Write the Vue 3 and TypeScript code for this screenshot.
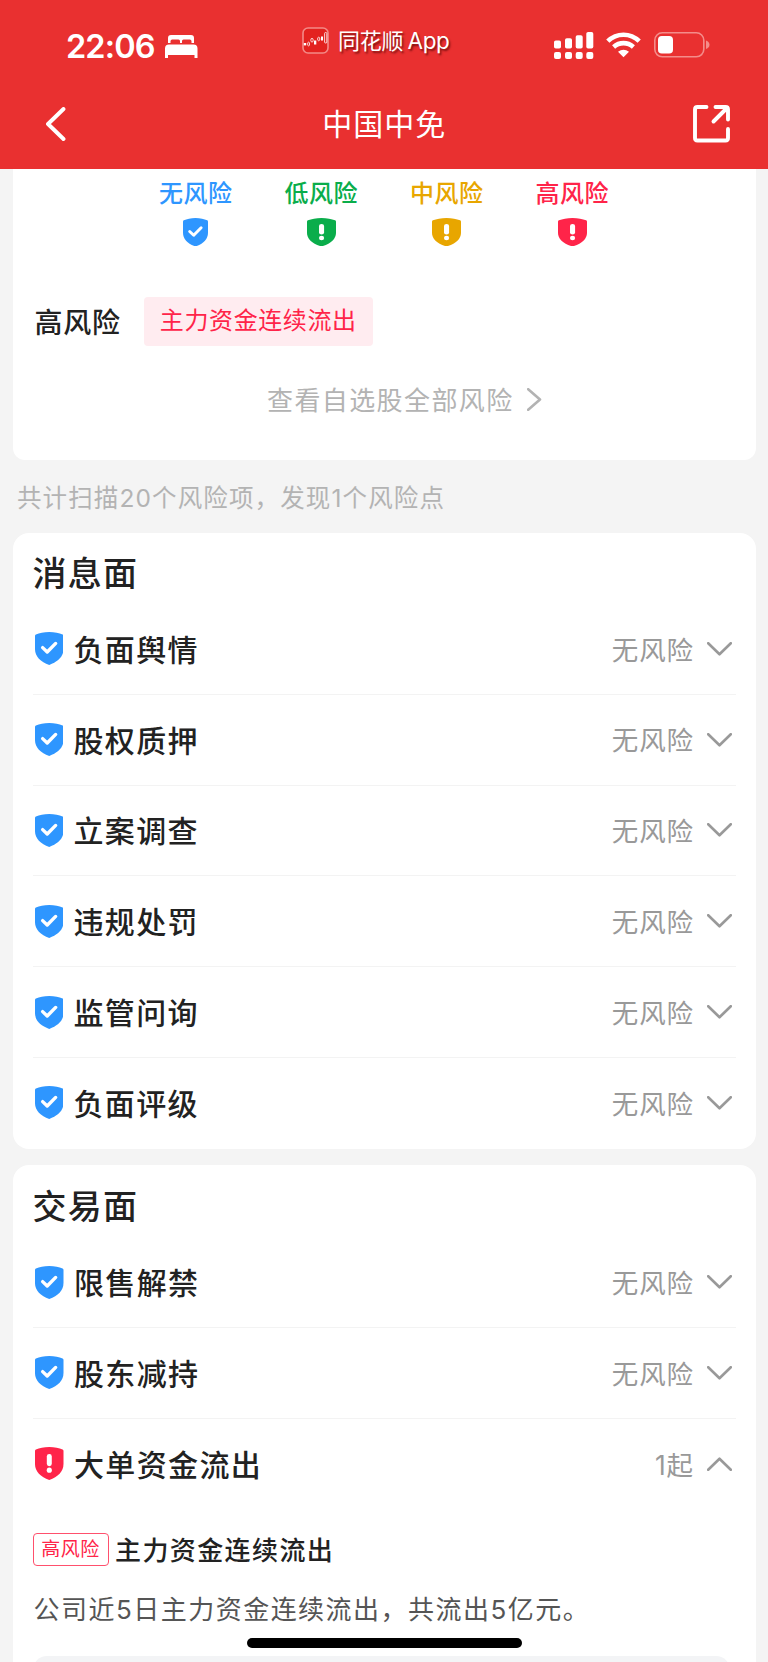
<script setup lang="ts">
import { defineComponent, h } from 'vue'

type Level = 'none' | 'low' | 'mid' | 'high'

interface RiskItem {
  name: string
  level: Level
  status: string
  open?: boolean
}

const ShieldIcon = defineComponent({
  props: { level: { type: String, required: true } },
  setup(props) {
    return () =>
      h('svg', { viewBox: '0 0 28 33', preserveAspectRatio: 'none', fill: 'currentColor' }, [
        h('path', {
          d: 'M14 0C8.8.1 4.2 1.2.9 2.600.3 2.900 0 3.300 0 3.900V17C0 24.800 5.500 29.700 14 33 22.500 29.700 28 24.800 28 17V3.900C28 3.300 27.700 2.900 27.100 2.600 23.800 1.200 19.200.100 14 0Z',
        }),
        props.level === 'none'
          ? h('path', {
              d: 'M7.500 15.600L12 20 20.300 11.400',
              fill: 'none',
              stroke: '#fff',
              'stroke-width': 3.3,
              'stroke-linecap': 'round',
              'stroke-linejoin': 'round',
            })
          : h('g', { fill: '#fff' }, [
              h('rect', { x: 11.6, y: 7, width: 4.9, height: 12.2, rx: 2.4 }),
              h('ellipse', { cx: 14.05, cy: 23.2, rx: 2.5, ry: 2.6 }),
            ]),
      ])
  },
})

const legend: { label: string; level: Level }[] = [
  { label: '无风险', level: 'none' },
  { label: '低风险', level: 'low' },
  { label: '中风险', level: 'mid' },
  { label: '高风险', level: 'high' },
]

const sections: { title: string; items: RiskItem[] }[] = [
  {
    title: '消息面',
    items: ['负面舆情', '股权质押', '立案调查', '违规处罚', '监管问询', '负面评级'].map((name) => ({
      name,
      level: 'none' as Level,
      status: '无风险',
    })),
  },
  {
    title: '交易面',
    items: [
      { name: '限售解禁', level: 'none', status: '无风险' },
      { name: '股东减持', level: 'none', status: '无风险' },
      { name: '大单资金流出', level: 'high', status: '1起', open: true },
    ],
  },
]
</script>

<template>
  <div class="page" lang="zh-CN">
    <header class="header">
      <div class="status">
        <span class="time">22:06</span>
        <svg class="bed" viewBox="0 0 33 23" fill="#fff">
          <path d="M3 8V3Q3 0 6 0H26Q29 0 29 3V8H26.500V6.200Q26.500 4.500 24.800 4.500H18.500Q17 4.500 17 6V8H15V6Q15 4.500 13.500 4.500H7.200Q5.500 4.500 5.500 6.200V8Z" />
          <path d="M0 23V13.500Q0 9.500 4 9.500H28.500Q32.500 9.500 32.500 13.500V23H29.500V20H3V23Z" />
        </svg>
        <div class="app">
          <svg class="app-icon" viewBox="0 0 27 27">
            <rect x="1" y="1" width="25" height="25" rx="5" fill="#e3221f" stroke="#f38a87" stroke-width="1.600" />
            <g fill="#fff">
              <rect x="1.800" y="16" width="2.400" height="2.400" />
              <rect x="12" y="13.500" width="2.300" height="4" />
              <rect x="19" y="9.500" width="2" height="4" />
            </g>
            <g fill="none" stroke="#fff" stroke-width=".8">
              <ellipse cx="6.600" cy="17" rx="1" ry="1.900" />
              <ellipse cx="10" cy="13.200" rx="1.200" ry="1.900" />
              <ellipse cx="16.700" cy="12" rx="1.100" ry="1.800" />
              <rect x="22.600" y="5.500" width="2.200" height="10.500" rx="1" />
            </g>
          </svg>
          <span class="app-name">同花顺<i>App</i></span>
        </div>
        <svg class="signal" viewBox="0 0 40 28" fill="#fff">
          <rect x="0" y="8.500" width="7" height="8" rx="1.800" />
          <rect x="11" y="6.300" width="7" height="10.200" rx="1.800" />
          <rect x="21.700" y="3.200" width="7" height="13.300" rx="1.800" />
          <rect x="32.300" y="0" width="7" height="16.500" rx="1.800" />
          <rect v-for="x in [0, 11, 21.7, 32.3]" :key="x" :x="x" y="20" width="7" height="7" rx="2" />
        </svg>
        <svg class="wifi" viewBox="0 0 35 26">
          <g fill="none" stroke="#fff" stroke-width="4.600">
            <path d="M1.800 9.200Q8.500 2.700 17.500 2.700T33.200 9.200" />
            <path d="M7.600 15Q12 11.100 17.500 11.100T27.400 15" />
          </g>
          <path d="M12 19.800Q17.500 15.500 23 19.800L17.500 25.300Z" fill="#fff" />
        </svg>
        <svg class="battery" viewBox="0 0 56 26">
          <rect x=".8" y=".8" width="49" height="24" rx="7.500" fill="none" stroke="#f48c8a" stroke-width="1.600" />
          <rect x="4" y="4" width="15" height="17.500" rx="3.800" fill="#fff" />
          <path d="M52 8.500Q55.500 9.800 55.500 12.800T52 17Z" fill="#f48c8a" />
        </svg>
      </div>
      <div class="nav">
        <svg class="back" viewBox="0 0 20 34">
          <path d="M17.500 2L2 17 17.500 32" />
        </svg>
        <h1>中国中免</h1>
        <svg class="share" viewBox="0 0 38 38">
          <path d="M13.500 2H4.500Q2 2 2 4.500V33Q2 35.500 4.500 35.500H32.500Q35 35.500 35 33V24" />
          <path d="M22.500 2H32.500Q35 2 35 4.500V14.500M34 3L20.500 16.500" />
        </svg>
      </div>
    </header>

    <section class="card summary">
      <div class="legend">
        <div v-for="l in legend" :key="l.label" class="legend-item" :class="l.level">
          <span>{{ l.label }}</span>
          <ShieldIcon class="legend-shield" :level="l.level" />
        </div>
      </div>
      <div class="alert">
        <b>高风险</b>
        <span class="chip">主力资金连续流出</span>
      </div>
      <div class="more">
        <span>查看自选股全部风险</span>
        <svg viewBox="0 0 15 23"><path d="M1.200 1.200L13 11.500 1.200 21.800" /></svg>
      </div>
    </section>

    <p class="note">共计扫描20个风险项，发现1个风险点</p>

    <section v-for="s in sections" :key="s.title" class="card group">
      <h2>{{ s.title }}</h2>
      <div v-for="i in s.items" :key="i.name" class="row" :class="i.level">
        <ShieldIcon class="shield" :level="i.level" />
        <span class="name">{{ i.name }}</span>
        <span class="state">{{ i.status }}</span>
        <svg class="chev" :class="{ up: i.open }" viewBox="0 0 25 14">
          <path d="M1.200 1.200L12.500 12.300 23.800 1.200" />
        </svg>
      </div>
      <div v-if="s.items.some((i) => i.open)" class="detail">
        <div class="detail-head">
          <span class="badge">高风险</span>
          <span class="detail-title">主力资金连续流出</span>
        </div>
        <p class="desc">公司近5日主力资金连续流出，共流出5亿元。</p>
        <div class="panel"></div>
      </div>
    </section>

    <div class="home"></div>
  </div>
</template>

<style>
body {
  margin: 0;
}
</style>

<style scoped>
.page {
  position: relative;
  width: 768px;
  height: 1662px;
  overflow: hidden;
  background: #f4f4f4;
  color: #222;
  font-family: Inter, 'Noto Sans CJK SC', sans-serif;
}
.page * {
  box-sizing: border-box;
}
svg {
  display: block;
  flex: none;
}
span, b, h1, h2 {
  white-space: nowrap;
}
.header {
  height: 168.500px;
  background: #e93030;
  color: #fff;
}
.status {
  display: flex;
  height: 84px;
  padding: 27px 0 0 66px;
}
.time {
  width: 99px;
  font-size: 32.500px;
  font-weight: 600;
  line-height: 39px;
  letter-spacing: -0.9px;
}
.bed {
  width: 33px;
  height: 23px;
  margin-top: 8px;
}
.app {
  display: flex;
  width: 251.500px;
  margin-left: 104px;
}
.app-icon {
  width: 27px;
  height: 27px;
}
.app-name {
  margin-left: 9px;
  font-size: 22px;
  line-height: 28px;
  letter-spacing: -0.2px;
  text-shadow: 1.500px 1.500px 2px rgba(70, 0, 0, 0.65);
}
.app-name i {
  margin-left: 4px;
  font-style: normal;
  font-size: 22.500px;
  letter-spacing: -0.3px;
}
.signal {
  width: 40px;
  height: 28px;
  margin-top: 5px;
}
.wifi {
  width: 35px;
  height: 26px;
  margin: 5px 0 0 12.500px;
}
.battery {
  width: 56px;
  height: 26px;
  margin: 5px 0 0 13px;
}
.nav {
  display: flex;
  justify-content: space-between;
  padding: 21px 37.500px 0 46px;
}
.back {
  width: 20px;
  height: 34px;
  margin-top: 2px;
}
.back path, .share path {
  fill: none;
  stroke: #fff;
  stroke-width: 3.900;
  stroke-linecap: round;
  stroke-linejoin: round;
}
h1 {
  margin: -1px 0 0 10px;
  font-size: 30px;
  font-weight: 400;
  line-height: 40px;
  letter-spacing: 1px;
}
.share {
  width: 38px;
  height: 38px;
}
.card {
  margin: 0 12.500px;
  background: #fff;
}
.summary {
  height: 291px;
  border-radius: 0 0 12px 12px;
}
.legend {
  display: grid;
  grid-template-columns: repeat(4, 125.500px);
  padding: 8px 0 0 120.500px;
}
.legend-item {
  display: flex;
  flex-direction: column;
  align-items: center;
  font-size: 24px;
  font-weight: 500;
  line-height: 34px;
  letter-spacing: 0.5px;
}
.legend-shield {
  width: 29px;
  height: 28.500px;
  margin-top: 7px;
}
.legend-item.none .legend-shield {
  width: 25px;
}
.legend-item.none, .none .shield { color: #2e96ff; }
.legend-item.low { color: #0aad4b; }
.legend-item.mid { color: #e8a600; }
.legend-item.high, .high .shield { color: #ff2449; }
.alert {
  display: flex;
  align-items: center;
  height: 49px;
  margin-top: 51px;
  padding-left: 22px;
}
.alert b {
  width: 109px;
  padding-top: 3px;
  font-size: 28px;
  font-weight: 500;
  line-height: 40px;
  letter-spacing: 0.8px;
}
.chip {
  width: 229.500px;
  height: 49px;
  border-radius: 4px;
  background: #ffecf0;
  color: #ff2449;
  font-size: 24px;
  line-height: 48.500px;
  letter-spacing: 0.6px;
  text-align: center;
}
.more {
  display: flex;
  align-items: center;
  height: 40px;
  margin-top: 33px;
  padding-left: 254.500px;
  color: #b3b3b3;
  font-size: 26px;
  line-height: 40px;
  letter-spacing: 1.400px;
}
.more span {
  padding-top: 3px;
}
.more svg {
  width: 15px;
  height: 23px;
  margin-left: 13px;
}
.more path, .chev path {
  fill: none;
  stroke: currentColor;
  stroke-width: 2.600;
  stroke-linecap: round;
  stroke-linejoin: round;
}
.note {
  height: 73.500px;
  margin: 0;
  padding: 2px 0 0 17px;
  color: #b3b3b3;
  font-size: 24.500px;
  line-height: 73px;
  letter-spacing: 1.120px;
}
.group {
  margin-bottom: 16.500px;
  padding: 0 20px;
  border-radius: 16px;
}
.group + .group {
  padding-top: 1px;
}
.group + .group .shield {
  margin-left: 0.500px;
}
h2 {
  height: 71px;
  margin: 0;
  padding-top: 5px;
  font-size: 34px;
  font-weight: 500;
  line-height: 71px;
  letter-spacing: 1.300px;
}
.row {
  display: flex;
  align-items: center;
  height: 90.800px;
  padding: 0 4px 0 2px;
  border-bottom: 1.500px solid #f3f3f3;
}
.group .row:last-child, .row.high {
  border-bottom-color: transparent;
}
.shield {
  width: 28.500px;
  height: 33px;
}
.name {
  margin: 2px 0 0 10.500px;
  font-size: 30px;
  font-weight: 500;
  line-height: 40px;
  letter-spacing: 1.350px;
}
.state {
  margin: 1.500px 12.500px 0 auto;
  color: #999;
  font-size: 26.500px;
  line-height: 40px;
  letter-spacing: 0.9px;
}
.chev {
  width: 25px;
  height: 14px;
  color: #999;
}
.chev.up {
  transform: rotate(180deg);
}
.detail {
  height: 180px;
  padding-top: 23.500px;
}
.detail-head {
  display: flex;
  align-items: center;
  height: 33px;
}
.badge {
  width: 76px;
  height: 33px;
  border: 1.500px solid #ff506d;
  border-radius: 4px;
  color: #ff2449;
  font-size: 19px;
  line-height: 32px;
  letter-spacing: 0.5px;
  text-align: center;
}
.detail-title {
  margin-left: 6.500px;
  padding-top: 2px;
  font-size: 26px;
  font-weight: 500;
  line-height: 35px;
  letter-spacing: 1.400px;
}
.desc {
  margin: 24px 0 0;
  padding-left: 1px;
  color: #555;
  font-size: 26px;
  line-height: 40px;
  letter-spacing: 1.480px;
}
.panel {
  height: 60px;
  margin: 26px 6px 0 0;
  border-radius: 14px;
  background: #f3f4f6;
}
.home {
  position: absolute;
  left: 247px;
  bottom: 14.500px;
  width: 275px;
  height: 9.500px;
  border-radius: 5px;
  background: #000;
}
</style>
